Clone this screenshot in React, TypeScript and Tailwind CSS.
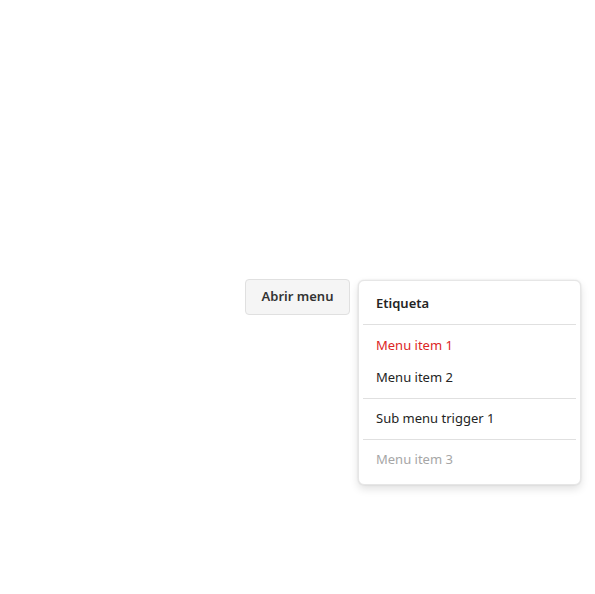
export default function App() {
  return (
    <div
      className="w-[595px] h-[594px] bg-white flex items-center justify-center text-[#242424]"
      style={{ fontFamily: '"Noto Sans", "Open Sans", sans-serif' }}
    >
      <div className="relative">
        <button className="h-[36px] w-[105px] rounded-[4px] border border-[#e0e0e0] bg-[#f5f5f5] text-[13px] font-semibold text-[#333]">
          Abrir menu
        </button>
        <div className="absolute left-[113px] top-[1px] w-[223px] rounded-[6px] border border-[#e6e6e6] bg-white pt-1 pb-2 px-1 shadow-[0_0_2px_rgba(0,0,0,0.12),0_4px_8px_rgba(0,0,0,0.12)]">
          <div className="h-[35px] pt-[3px] flex items-center px-[13px] text-[13px] font-semibold">
            Etiqueta
          </div>
          <div className="mt-1 mb-[5px] h-px bg-[#e0e0e0]" />
          <div className="h-8 flex items-center px-[13px] text-[13px] text-[#dc2626]">
            Menu item 1
          </div>
          <div className="h-8 flex items-center px-[13px] text-[13px]">
            Menu item 2
          </div>
          <div className="my-1 h-px bg-[#e0e0e0]" />
          <div className="h-8 flex items-center px-[13px] text-[13px]">
            Sub menu trigger 1
          </div>
          <div className="my-1 h-px bg-[#e0e0e0]" />
          <div className="h-8 flex items-center px-[13px] text-[13px] text-[#a6a6a6]">
            Menu item 3
          </div>
        </div>
      </div>
    </div>
  );
}
